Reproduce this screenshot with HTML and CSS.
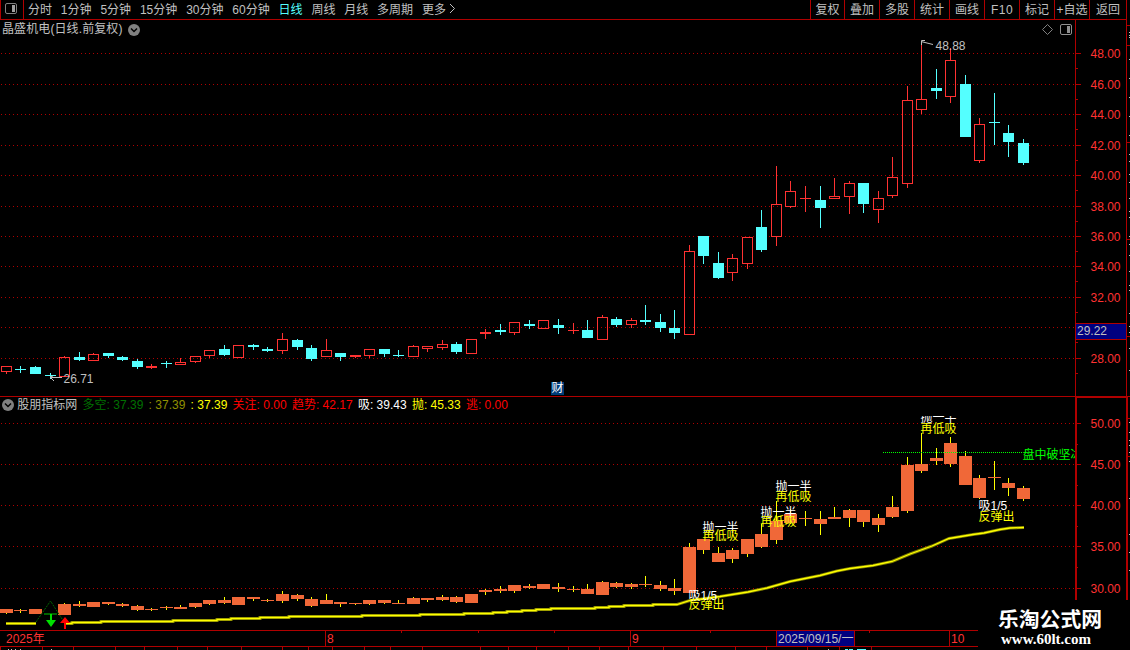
FILE: index.html
```
<!DOCTYPE html>
<html lang="zh-CN">
<head>
<meta charset="UTF-8" />
<meta name="viewport" content="width=device-width, initial-scale=1" />
<title>晶盛机电 日线</title>
<link rel="stylesheet" href="styles.css">
</head>
<body>

<div class="terminal">
  <div class="screen">
    <header class="toolbar">
      <div class="layout-btn">
        <svg width="12" height="11" viewBox="0 0 12 11"><rect x="0.5" y="0.5" width="11" height="10" rx="1.5" fill="none" stroke="#808080"/><rect x="7" y="2" width="3" height="7" fill="#a0a0a0"/></svg>
      </div>
      <nav class="periods">
        <span>分时</span>
        <span>1分钟</span>
        <span>5分钟</span>
        <span>15分钟</span>
        <span>30分钟</span>
        <span>60分钟</span>
        <span class="active">日线</span>
        <span>周线</span>
        <span>月线</span>
        <span>多周期</span>
        <span>更多</span>
        <svg class="more" width="7" height="11" viewBox="0 0 7 11"><path d="M1 1 L5.5 5.5 L1 10" fill="none" stroke="#c0c0c0"/></svg>
      </nav>
      <nav class="tools">
        <span class="first">复权</span>
        <span>叠加</span>
        <span>多股</span>
        <span>统计</span>
        <span>画线</span>
        <span class="f10">F10</span>
        <span>标记</span>
        <span>+自选</span>
        <span class="last">返回</span>
      </nav>
    </header>

    <section class="panel price-panel">
      <div class="panel-title">
        <span>晶盛机电(日线.前复权)</span>
        <svg width="12" height="12" viewBox="0 0 12 12"><circle cx="6" cy="6" r="6" fill="#808080"/><path d="M3 4.5 L6 7.5 L9 4.5" fill="none" stroke="#000" stroke-width="1.5"/></svg>
      </div>
      <div class="panel-icons">
        <svg width="11" height="11" viewBox="0 0 11 11"><path d="M5.5 0.5 L10.5 5.5 L5.5 10.5 L0.5 5.5 Z" fill="none" stroke="#808080"/></svg>
        <svg width="12" height="11" viewBox="0 0 12 11"><rect x="0.5" y="0.5" width="11" height="10" rx="1.5" fill="none" stroke="#909090"/><rect x="7" y="2" width="3" height="7" fill="#909090"/></svg>
      </div>
      <svg id="price-chart" width="1075" height="376" viewBox="0 20 1075 376"></svg>
      <svg id="price-axis" class="axis" width="51" height="376" viewBox="1075 20 51 376"></svg>
      <span class="badge">财</span>
    </section>

    <section class="panel indicator-panel">
      <div class="indicator-main">
        <div class="indicator-row">
          <svg width="12" height="12" viewBox="0 0 12 12"><circle cx="6" cy="6" r="6" fill="#808080"/><path d="M3 4.5 L6 7.5 L9 4.5" fill="none" stroke="#000" stroke-width="1.5"/></svg>
          <span class="name">股朋指标网</span>
          <span class="green">多空: 37.39</span>
          <span class="olive">: 37.39</span>
          <span class="yellow">: 37.39</span>
          <span class="red">关注: 0.00</span>
          <span class="red">趋势: 42.17</span>
          <span class="white">吸: 39.43</span>
          <span class="yellow">抛: 45.33</span>
          <span class="red">逃: 0.00</span>
        </div>
        <svg id="indicator-chart" width="1075" height="214" viewBox="0 416 1075 214"></svg>
      </div>
      <svg id="indicator-axis" class="axis" width="52" height="233" viewBox="1075 397 52 233"></svg>
    </section>

    <div class="dates">
      <span class="july">2025年</span>
      <span class="august">8</span>
      <span class="september">9</span>
      <span class="current">2025/09/15/一</span>
      <span class="gap"></span>
      <span class="october">10</span>
      <svg id="week-ticks" width="977" height="2" viewBox="0 631 977 2"></svg>
    </div>
    <svg id="bottom-strip" width="1127" height="3" viewBox="0 647 1127 3"></svg>
  </div>
  <svg id="side-strip" width="3" height="650" viewBox="1127 0 3 650"></svg>

  <div class="watermark">
    <div class="site">乐淘公式网</div>
    <div class="url">www.60lt.com</div>
  </div>
</div>

<script src="chart.js"></script>
</body>
</html>
```
FILE: styles.css
```
:root {
  --line: #b00000;
  --red: #ff3232;
  --text: #c0c0c0;
  --navy: #000080;
}

* {
  box-sizing: border-box;
}

body {
  margin: 0;
  background-color: #000;
  color: var(--text);
  font-family: 'Liberation Sans', 'Noto Sans CJK SC', sans-serif;
  font-size: 12px;
  overflow: hidden;
}

svg {
  display: block;
  flex: none;
}

.terminal {
  position: relative;
  display: flex;
  width: 1130px;
  height: 650px;
  overflow: hidden;
}

.screen {
  width: 1127px;
  display: flex;
  flex-direction: column;
}

.toolbar {
  height: 20px;
  display: flex;
  border-bottom: 1px solid var(--line);
  border-right: 1px solid var(--line);
  line-height: 21px;
  white-space: nowrap;
}

.layout-btn {
  width: 24px;
  padding: 3px 0 0 4px;
  border-left: 1px solid var(--line);
  border-right: 1px solid var(--line);
}

.periods {
  display: flex;
  gap: 8.85px;
  padding-left: 4px;
}

.periods .active {
  color: #54ffff;
}

.more {
  margin: 3px 0 0 -6px;
}

.tools {
  display: flex;
  margin-left: auto;
}

.tools span {
  width: 35px;
  border-left: 1px solid var(--line);
  text-align: center;
}

.tools .first {
  width: 34px;
}

.tools .last {
  width: 37px;
}

.tools .f10 {
  letter-spacing: 0.5px;
}

.panel {
  position: relative;
  display: flex;
}

.price-panel {
  height: 377px;
  border-bottom: 1px solid var(--line);
  border-right: 1px solid var(--line);
}

.panel-title {
  position: absolute;
  left: 2px;
  top: 2px;
  display: flex;
  align-items: center;
  gap: 5px;
  line-height: 15px;
  letter-spacing: 0.1px;
}

.panel-icons {
  position: absolute;
  left: 1042px;
  top: 4px;
  display: flex;
  gap: 7px;
}

.badge {
  position: absolute;
  left: 551px;
  top: 362px;
  width: 13px;
  height: 13px;
  background-color: #003c78;
  color: #fff;
  line-height: 13px;
  text-align: center;
}

.axis {
  font-size: 12px;
}

.indicator-panel {
  height: 233px;
}

.indicator-row {
  height: 19px;
  display: flex;
  gap: 5.3px;
  padding: 2px 0 0 2px;
  line-height: 13px;
  white-space: nowrap;
}

.indicator-row svg {
  margin-right: -2px;
}

.green { color: #007000; }
.olive { color: #909000; }
.yellow { color: #ffff00; }
.red { color: #ff0000; }
.white { color: #fff; }

.dates {
  position: relative;
  height: 17px;
  display: flex;
  border-top: 1px solid var(--line);
  border-bottom: 1px solid var(--line);
  color: var(--red);
  line-height: 17px;
  white-space: nowrap;
}

.dates span {
  border-left: 1px solid var(--line);
  padding-left: 1px;
}

.dates .july {
  width: 325px;
  border-left: none;
  padding-left: 6px;
}

.dates .august { width: 305px; }
.dates .september { width: 146px; }

.dates .current {
  width: 78px;
  background-color: var(--navy);
  color: var(--text);
}

.dates .gap { width: 95px; }
.dates .october { flex: 1; }

.dates svg {
  position: absolute;
  left: 0;
  top: 0;
}

.watermark {
  position: absolute;
  left: 978px;
  top: 600px;
  width: 152px;
  height: 50px;
  padding: 5px 0 0 20px;
  background-color: #000;
  color: #fff;
  font-weight: bold;
}

.site {
  font-family: 'Noto Sans CJK SC', sans-serif;
  font-size: 20.8px;
  line-height: 27px;
}

.url {
  padding-left: 3px;
  font-family: 'Liberation Serif', serif;
  font-size: 15px;
  line-height: 14px;
}
```
FILE: chart.js
```
const RED = '#ff3232';
const CYAN = '#54ffff';
const LINE = '#b00000';

// [direction, high, body top, body bottom, low]
const candles = [
  ['r',366,366,372,374], ['c',366,369,370,373], ['c',366,367,374,374], ['c',373,375,376,379],
  ['r',356,357,377,377], ['c',352,357,360,361], ['r',353,354,361,361], ['c',353,353,356,358],
  ['c',356,357,360,361], ['c',359,361,367,369], ['r',364,366,368,369], ['c',361,363,364,368],
  ['r',358,362,365,365], ['r',356,356,362,363], ['r',350,350,356,358], ['c',345,349,355,356],
  ['r',345,345,358,358], ['c',344,345,347,350], ['c',347,349,351,352], ['r',333,339,351,354],
  ['c',339,340,347,350], ['c',345,348,359,361], ['r',339,350,357,357], ['c',353,353,357,361],
  ['r',355,355,357,358], ['r',349,349,356,358], ['c',349,349,354,357], ['c',350,355,356,357],
  ['r',345,346,357,357], ['r',346,346,349,352], ['r',340,344,348,350], ['c',342,344,352,354],
  ['r',339,339,354,354], ['r',329,332,334,339], ['c',324,330,332,335], ['r',322,322,333,335],
  ['c',320,324,326,329], ['r',320,320,329,329], ['c',319,325,328,334], ['r',323,330,331,334],
  ['c',320,330,338,338], ['r',315,317,340,340], ['c',317,319,325,327], ['r',318,320,325,328],
  ['c',305,320,322,325], ['c',314,322,328,332], ['c',310,328,333,339], ['r',245,251,335,335],
  ['c',236,236,256,264], ['c',252,263,278,279], ['r',254,258,273,281], ['r',237,237,264,269],
  ['c',210,227,250,252], ['r',166,204,237,246], ['r',181,191,207,208], ['r',186,198,199,212],
  ['c',186,200,208,228], ['r',178,196,199,199], ['r',181,183,197,214], ['c',183,183,204,213],
  ['r',191,198,210,223], ['r',157,177,196,198], ['r',86,100,184,188], ['r',41,99,110,114],
  ['c',69,88,91,99], ['r',48,60,97,103], ['c',75,84,137,137], ['r',118,124,161,163],
  ['c',93,122,123,145], ['c',125,133,142,157], ['c',139,143,163,165]
];

const priceRows = [[48,53],[46,84],[44,114],[42,145],[40,175],[38,206],[36,236],[34,266],[32,297],[30,327],[28,358]];
const indicatorRows = [[50,423],[45,464],[40,505],[35,546],[30,588]];

const rect = (x, y, w, h, fill) => `<rect x="${x}" y="${y}" width="${w}" height="${h}" fill="${fill}"/>`;
const text = (x, y, fill, str) => `<text x="${x}" y="${y}" fill="${fill}">${str}</text>`;
const centre = i => Math.round(5.95 + i * 14.528);
// same price on the lower scale
const lower = y => Math.round(439.5 + (y - 53) * 0.541);

function grid(rows) {
  return rows.map(r => `<path d="M1 ${r[1]}.5 H1075" stroke="#b00000" stroke-dasharray="1 3"/>`).join('');
}

function drawPrice() {
  let out = grid(priceRows);
  candles.forEach(([type, high, top, bottom, low], i) => {
    const x = centre(i);
    const h = bottom - top;
    const color = type === 'r' ? RED : CYAN;
    out += rect(x, high, 1, top - high, color);
    out += rect(x, bottom, 1, low - bottom, color);
    if (type === 'r' && h > 2) {
      out += `<rect x="${x - 4.5}" y="${top + 0.5}" width="10" height="${h - 1}" fill="none" stroke="${color}"/>`;
    } else {
      out += rect(x - 5, top, 11, h, color);
    }
  });
  // high and low markers
  out += '<path d="M933 44.5 L921 41.5 M921.5 45 V40.5 H925" fill="none" stroke="#c0c0c0"/>';
  out += text(935.5, 50, '#c0c0c0', '48.88');
  out += '<path d="M62 377.5 H50 M54 381 L50 377 L53 376" fill="none" stroke="#c0c0c0"/>';
  out += text(63.5, 383, '#c0c0c0', '26.71');
  document.getElementById('price-chart').innerHTML = out;
}

function drawPriceAxis() {
  let out = rect(1075, 20, 1, 376, LINE);
  priceRows.forEach(([value, y]) => {
    out += rect(1076, y, 5, 1, LINE) + rect(1076, y + 15, 2, 1, LINE);
    if (value !== 30) out += text(1090.5, y + 5, RED, value + '.00');
  });
  out += '<rect x="1075.5" y="323.5" width="52" height="16" fill="#000080" stroke="#b00000"/>';
  out += text(1077, 335, '#c0c0c0', '29.22');
  document.getElementById('price-axis').innerHTML = out;
}

function drawIndicator() {
  let out = grid(indicatorRows);

  const steps = [[66,623],[72,622],[101,621],[173,620],[217,619],[231,618],[260,617],[289,616],[362,615],
    [420,614],[464,613],[493,612],[507,611],[522,610],[536,609],[551,608],[595,607],[609,606],[624,605],[653,604]];
  let line = 'M6 623.5 H36 M66 623.5';
  steps.forEach(([x, y]) => line += ` H${x} V${y}.5`);
  line += ` H677 L690 600.5 L720 596.5 L748 592 L767 588 L790 581.5 L820 575.5 L837 571 L850 568.5
    L873 565.5 L892 561.5 L910 554 L932 546 L949 538.5 L973 534.5 L984 533 L1000 529.5 L1010 528 L1024 527.5`;

  candles.forEach(([type, high, top, bottom, low], i) => {
    const x = centre(i);
    const y1 = lower(top);
    const y2 = lower(bottom - 1) + 1;
    if (i === 3) {
      out += rect(x - 6, 613, 13, 2, '#006400');
      return;
    }
    out += rect(x, lower(high), 1, lower(low - 1) + 1 - lower(high), '#ffff00');
    out += rect(x - 6, y1, 13, y2 - y1, '#f06838');
  });
  out += `<path d="${line}" fill="none" stroke="#808000" stroke-width="3"/>`;
  out += `<path d="${line}" fill="none" stroke="#ffff00" stroke-width="1.3"/>`;

  out += '<path d="M36 622 L50.5 601 L64 622" fill="none" stroke="#006800" stroke-dasharray="2 1"/>';
  out += '<path d="M50 614 H52 V620 H56 L51 627 L46 620 H50 Z" fill="#00e000"/>';
  out += '<path d="M65 617 L70 623 H66 V629 H64 V623 H60 Z" fill="#ff0000"/>';
  out += '<path d="M883 452.5 H1023" stroke="#00ff00" stroke-dasharray="1 1"/>';

  // signals: x, baseline of the white line, baseline of the yellow line
  [[703,532,540],[761,517,526],[776,491,501],[921,422,433]].forEach(([x, a, b]) => {
    out += text(x - 0.5, a, '#fff', '抛一半') + text(x - 0.5, b, '#ffff00', '再低吸');
  });
  [[689,600,609],[979,510,521]].forEach(([x, a, b]) => {
    out += text(x - 0.5, a, '#fff', '吸1/5') + text(x - 0.5, b, '#ffff00', '反弹出');
  });
  out += text(1022.5, 459, '#00ff00', '盘中破坚冰');
  document.getElementById('indicator-chart').innerHTML = out;
}

function drawIndicatorAxis() {
  let out = rect(1075, 397, 2, 233, LINE) + rect(1126, 397, 1, 233, LINE) + rect(1075, 397, 52, 1, LINE);
  indicatorRows.forEach(([value, y]) => {
    out += rect(1077, y, 4, 1, LINE) + rect(1077, y + 21, 1, 1, LINE);
    out += text(1090.5, y + 5, RED, value + '.00');
  });
  document.getElementById('indicator-axis').innerHTML = out;
}

function drawStrips() {
  document.getElementById('week-ticks').innerHTML =
    [401,478,554,710,869].map(x => rect(x, 631, 1, 2, LINE)).join('');

  let out = '';
  [0,42,73,115,144,177,207,241,282,308,332,364,390,422,480,508,536,568,599,628,663,696,735,766,807,839,871]
    .forEach(x => out += rect(x, 647, 1, 3, LINE));
  [8,11,15,20,51,828].forEach(x => out += rect(x, 649, 1, 1, '#c0c0c0'));
  out += rect(845, 649, 3, 1, CYAN) + rect(849, 649, 4, 1, CYAN) + rect(857, 649, 9, 1, CYAN);
  document.getElementById('bottom-strip').innerHTML = out;

  out = rect(1127, 397, 1, 203, LINE);
  [25,45,142,239,336,396,418,456].forEach(y => out += rect(1127, y, 3, 1, LINE));
  [32,35,37,59,78,97,116,135,154,161,174,182,198,211,217,236,244,255,271,285,290,313,326,332,348,370,
    422,432,440,445,452,461,498,534,552,570].forEach(y => out += rect(1129, y, 1, 1, '#c0c0c0'));
  document.getElementById('side-strip').innerHTML = out;
}

drawPrice();
drawPriceAxis();
drawIndicator();
drawIndicatorAxis();
drawStrips();
```
